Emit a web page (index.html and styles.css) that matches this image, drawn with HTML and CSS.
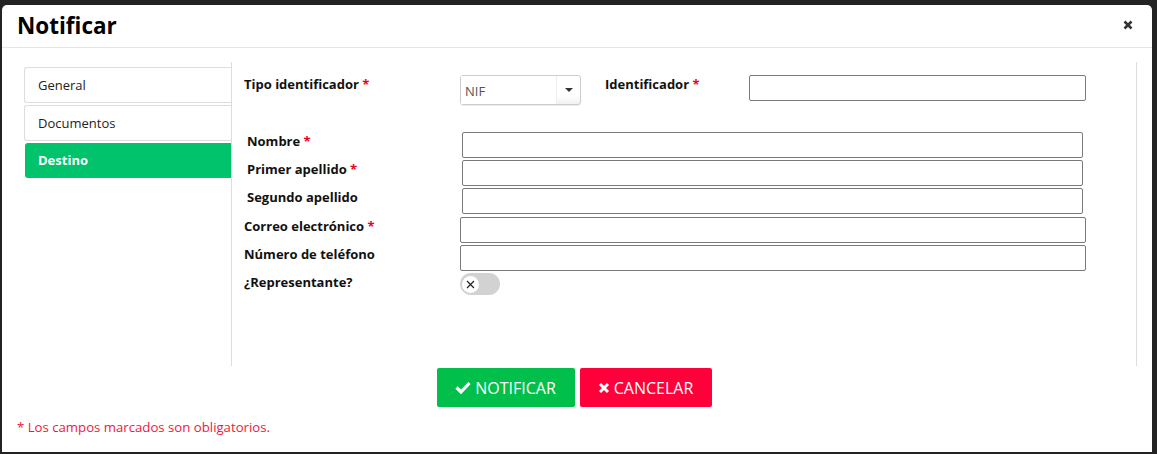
FILE: index.html
```html
<!DOCTYPE html>
<html lang="es">
<head>
<meta charset="utf-8">
<title>Notificar</title>
<link rel="stylesheet" href="styles.css">
</head>
<body>
<div class="modal">
  <div class="modal-header">
    <h1 class="title">Notificar</h1>
    <button class="close" aria-label="Cerrar">
      <svg width="10" height="10" viewBox="0 0 10 10"><path d="M1.5 1.5 L8.5 8.5 M8.5 1.5 L1.5 8.5" stroke="#333" stroke-width="2.6" stroke-linecap="butt"/></svg>
    </button>
  </div>
  <div class="modal-body">
    <div class="tabs">
      <div class="tab">General</div>
      <div class="tab">Documentos</div>
      <div class="tab active">Destino</div>
    </div>
    <div class="panel">
      <div class="row row-first">
        <label class="lbl">Tipo identificador <span class="req">*</span></label>
        <div class="select">
          <span class="select-val">NIF</span>
          <span class="select-btn"><span class="caret"></span></span>
        </div>
        <label class="lbl lbl-id">Identificador <span class="req">*</span></label>
        <input class="inp inp-id" type="text">
      </div>
      <div class="row row-name">
        <label class="lbl lbl-in">Nombre <span class="req">*</span></label>
        <input class="inp inp-mid" type="text">
      </div>
      <div class="row">
        <label class="lbl lbl-in">Primer apellido <span class="req">*</span></label>
        <input class="inp inp-mid" type="text">
      </div>
      <div class="row">
        <label class="lbl lbl-in">Segundo apellido</label>
        <input class="inp inp-mid" type="text">
      </div>
      <div class="row row-gap">
        <label class="lbl">Correo electrónico <span class="req">*</span></label>
        <input class="inp inp-wide" type="text">
      </div>
      <div class="row">
        <label class="lbl">Número de teléfono</label>
        <input class="inp inp-wide" type="text">
      </div>
      <div class="row">
        <label class="lbl">¿Representante?</label>
        <div class="toggle">
          <span class="knob">
            <svg width="9" height="9" viewBox="0 0 9 9"><path d="M1 1 L8 8 M8 1 L1 8" stroke="#222" stroke-width="1.2"/></svg>
          </span>
        </div>
      </div>
    </div>
  </div>
  <div class="actions">
    <button class="btn btn-ok">
      <svg width="16" height="13" viewBox="0 0 16 13"><path d="M1.5 6.5 L6 11 L14.5 2" stroke="#fff" stroke-width="3.2" fill="none"/></svg>
      NOTIFICAR
    </button>
    <button class="btn btn-cancel">
      <svg width="12" height="12" viewBox="0 0 12 12"><path d="M2 2 L10 10 M10 2 L2 10" stroke="#fff" stroke-width="3"/></svg>
      CANCELAR
    </button>
  </div>
  <p class="note">* Los campos marcados son obligatorios.</p>
</div>
</body>
</html>
```
FILE: styles.css
```css
html, body {
  margin: 0;
  padding: 0;
}
body {
  background: #232323;
  font-family: "Open Sans", "Liberation Sans", sans-serif;
  color: #111;
  height: 454px;
  overflow: hidden;
}
.modal {
  margin: 5px 0 0 2px;
  width: 1150px;
  height: 447px;
  background: #fff;
  border-radius: 5px 5px 0 0;
  overflow: hidden;
  display: flex;
  flex-direction: column;
}
.modal-header {
  height: 42px;
  border-bottom: 1px solid #e5e5e5;
  display: flex;
  align-items: center;
  justify-content: space-between;
  padding: 0 19px 0 15px;
}
.title {
  margin: 0;
  font-size: 22.5px;
  font-weight: 700;
  color: #000;
  line-height: 30px;
}
.close {
  border: 0;
  background: none;
  padding: 0;
  margin-top: -2px;
  display: flex;
}
.modal-body {
  display: flex;
  padding: 14px 0 0 22px;
}
.tabs {
  width: 207px;
  margin-top: 5px;
  display: flex;
  flex-direction: column;
  gap: 2px;
}
.tab {
  height: 34px;
  border: 1px solid #ddd;
  border-right: 0;
  border-radius: 3px 0 0 3px;
  font-size: 13px;
  line-height: 34px;
  padding-left: 13px;
  color: #222;
}
.tab.active {
  height: 35px;
  line-height: 35px;
  background: #00c36b;
  border: 0;
  color: #fff;
  font-weight: 700;
  margin-left: 1px;
  padding-left: 13px;
}
.panel {
  box-sizing: border-box;
  width: 906px;
  height: 304px;
  border-left: 1px solid #ddd;
  border-right: 1px solid #ddd;
  padding: 13px 0 0 12px;
}
.row {
  display: flex;
  align-items: flex-start;
  margin-top: 2px;
}
.row-first {
  margin-top: 0;
}
.row-name {
  margin-top: 27px;
}
.row-gap {
  margin-top: 3px;
}
.lbl {
  width: 216px;
  font-size: 13px;
  font-weight: 700;
  line-height: 18px;
  color: #111;
  flex: none;
}
.lbl-in {
  width: 215px;
  padding-left: 3px;
}
.lbl-id {
  width: 144px;
  margin-left: 24px;
}
.req {
  color: #f0001e;
}
.inp {
  box-sizing: border-box;
  height: 26px;
  border: 1px solid #7a7a7a;
  border-radius: 2px;
  margin: 0;
  padding: 0 4px;
  background: #fff;
  flex: none;
}
.inp-id {
  width: 337px;
}
.inp-mid {
  width: 621px;
}
.inp-wide {
  width: 626px;
}
.select {
  box-sizing: border-box;
  width: 121px;
  height: 30px;
  border: 1px solid #ccc;
  border-radius: 3px;
  display: flex;
  align-items: stretch;
  background: linear-gradient(#fff 70%, #f1f1f1);
  box-shadow: 0 1px 1px rgba(0,0,0,0.08);
  flex: none;
}
.select-val {
  flex: 1;
  font-size: 13px;
  color: #555;
  line-height: 30px;
  padding-left: 4px;
  background: #fff;
  border-right: 1px solid #eee;
}
.select-btn {
  width: 23px;
  display: flex;
  align-items: center;
  justify-content: center;
}
.caret {
  width: 0;
  height: 0;
  border-left: 4px solid transparent;
  border-right: 4px solid transparent;
  border-top: 4px solid #333;
}
.toggle {
  width: 40px;
  height: 22px;
  border-radius: 11px;
  background: #d2d2d2;
  display: flex;
  align-items: center;
  padding-left: 2px;
  box-sizing: border-box;
  margin-top: 0;
}
.knob {
  width: 17px;
  height: 17px;
  border-radius: 50%;
  background: #fff;
  display: flex;
  align-items: center;
  justify-content: center;
}
.actions {
  display: flex;
  justify-content: center;
  gap: 5px;
  margin-top: 2px;
  padding-right: 6px;
}
.btn {
  height: 39px;
  border: 0;
  border-radius: 2px;
  color: #fff;
  font-family: "Open Sans", "Liberation Sans", sans-serif;
  font-size: 16px;
  display: flex;
  align-items: center;
  justify-content: center;
  gap: 4px;
  padding: 0;
}
.btn-ok {
  width: 138px;
  background: #00c04b;
}
.btn-cancel {
  width: 132px;
  background: #ff003a;
}
.note {
  margin: 11px 0 0 15px;
  font-size: 13.2px;
  line-height: 18px;
  color: #ec1a38;
}
```
